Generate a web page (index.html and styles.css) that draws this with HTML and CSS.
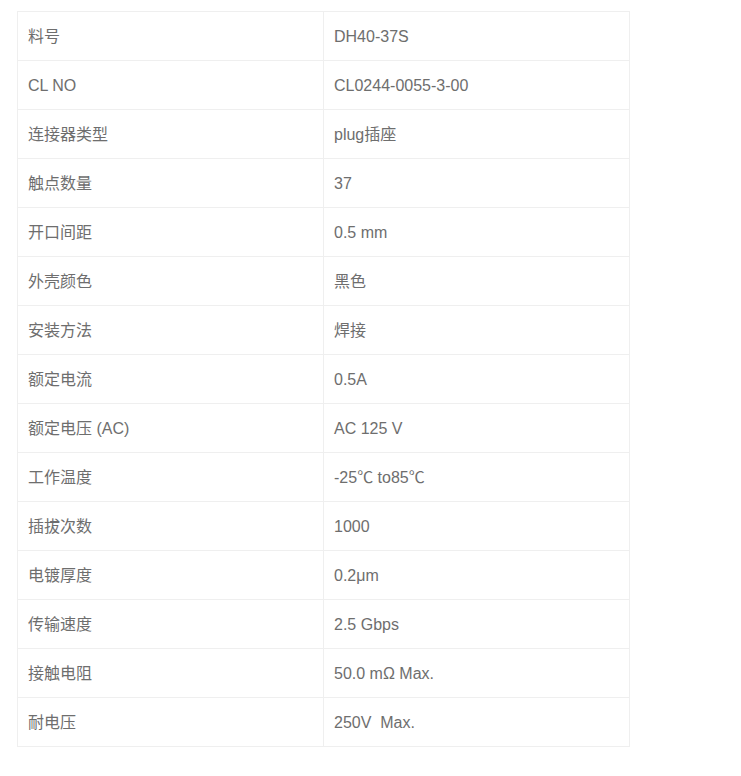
FILE: index.html
```html
<!DOCTYPE html>
<html lang="zh-CN">
<head>
<meta charset="utf-8">
<link rel="stylesheet" href="styles.css">
</head>
<body>
<div class="wrap">
<table class="spec">
<tbody>
<tr><td>料号</td><td>DH40-37S</td></tr>
<tr><td>CL NO</td><td>CL0244-0055-3-00</td></tr>
<tr><td>连接器类型</td><td>plug插座</td></tr>
<tr><td>触点数量</td><td>37</td></tr>
<tr><td>开口间距</td><td>0.5 mm</td></tr>
<tr><td>外壳颜色</td><td>黑色</td></tr>
<tr><td>安装方法</td><td>焊接</td></tr>
<tr><td>额定电流</td><td>0.5A</td></tr>
<tr><td>额定电压 (AC)</td><td>AC 125 V</td></tr>
<tr><td>工作温度</td><td>-25℃ to85℃</td></tr>
<tr><td>插拔次数</td><td>1000</td></tr>
<tr><td>电镀厚度</td><td>0.2μm</td></tr>
<tr><td>传输速度</td><td>2.5 Gbps</td></tr>
<tr><td>接触电阻</td><td>50.0 mΩ Max.</td></tr>
<tr><td>耐电压</td><td>250V&nbsp; Max.</td></tr>
</tbody>
</table>
</div>
</body>
</html>
```
FILE: styles.css
```css
html, body {
  margin: 0;
  padding: 0;
  background: #fff;
}
.wrap {
  padding: 11px 0 0 17px;
}
.spec {
  border-collapse: collapse;
  width: 613px;
  table-layout: fixed;
  font-family: "Liberation Sans", "Noto Sans CJK SC", sans-serif;
  font-size: 16px;
  color: #6e6e6e;
}
.spec td {
  border: 1px solid #efefef;
  height: 49px;
  padding: 1px 10px 0;
  box-sizing: border-box;
  vertical-align: middle;
  line-height: 20px;
}
```
